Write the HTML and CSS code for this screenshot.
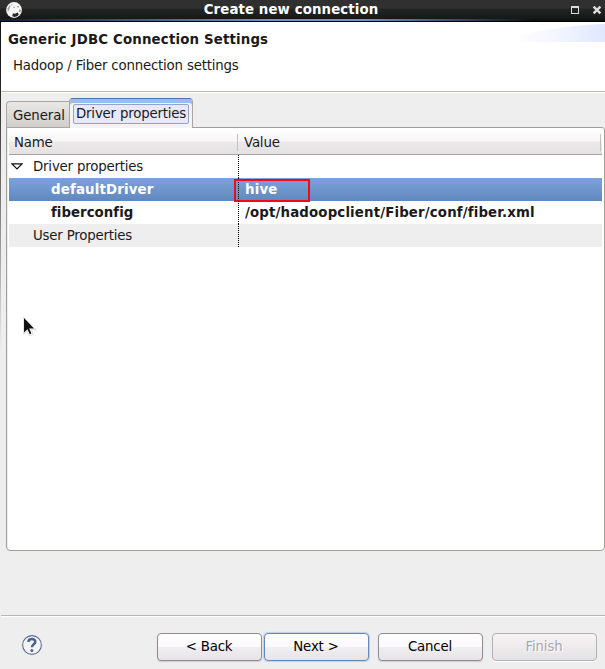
FILE: index.html
```html
<!DOCTYPE html>
<html lang="en">
<head>
<meta charset="utf-8">
<title>Create new connection</title>
<link rel="stylesheet" href="styles.css">
</head>
<body>
<div class="window">
  <header class="titlebar">
    <svg class="logo" width="16" height="16" viewBox="0 0 16 16">
      <circle cx="8" cy="8" r="7.9" fill="#f6f6f6"/>
      <path d="M1.5 6.5 3.2 3.6 4.6 3.4 3.6 6.5 2.6 9.5 1.5 9Z" fill="#a5a5a5"/>
      <path d="M5.2 2.6 6.4 2 5.8 3.4ZM11.4 3.8l1.4.8-.3 1-1.1-.6ZM7.6 4.8h1v1h-1ZM13.6 7l1 1.3-.4 2.4-.9-1.2Z" fill="#6b6260"/>
      <path d="M7 11.2 9 11.8 11.5 10.6 12.8 12.2 11.6 14 8.6 15 6.2 14.2Z" fill="#302725"/>
    </svg>
    <h1>Create new connection</h1>
    <svg class="controls" width="30" height="9" viewBox="0 0 30 9">
      <path d="M0 0h8v8H0ZM1 2v5h6V2Z" fill="#ddd" fill-rule="evenodd"/>
      <path d="m22.6 .6 6.8 6.8m0-6.8-6.8 6.8" stroke="#ddd" stroke-width="2.4"/>
    </svg>
  </header>
  <section class="banner">
    <div>
      <h2>Generic JDBC Connection Settings</h2>
      <p>Hadoop / Fiber connection settings</p>
    </div>
    <svg class="swoosh" width="84" height="20" viewBox="0 0 84 20">
      <defs><linearGradient id="sweep"><stop offset="0" stop-color="#fffcff"/><stop offset=".5" stop-color="#f1f4ff"/><stop offset="1" stop-color="#e0e7ff"/></linearGradient></defs>
      <path d="M0 20V13Q42 3 84 2V20Z" fill="url(#sweep)"/>
    </svg>
  </section>
  <main>
    <nav class="tabs">
      <div class="tab">General</div>
      <div class="tab active"><span>Driver properties</span></div>
    </nav>
    <section class="panel">
      <div class="row head"><div class="name">Name</div><div class="value">Value</div></div>
      <div class="row"><div class="name group"><svg class="expander" width="12" height="7" viewBox="0 0 12 7"><path d="M1 .8h10L6 6Z" fill="#fff" stroke="#111" stroke-width="1.2"/></svg>Driver properties</div><div class="value"></div></div>
      <div class="row bold selected"><div class="name item">defaultDriver</div><div class="value">hive<i class="mark"></i></div></div>
      <div class="row bold"><div class="name item config">fiberconfig</div><div class="value path">/opt/hadoopclient/Fiber/conf/fiber.xml</div></div>
      <div class="row alt"><div class="name group">User Properties</div><div class="value"></div></div>
    </section>
  </main>
  <footer>
    <svg class="help" width="20" height="20" viewBox="0 0 20 20">
      <circle cx="10" cy="10" r="9.4" fill="#f4f4f8" stroke="#5a6d93" stroke-width="1.1"/>
      <path d="M6.3 6.9C6.7 3 13.5 3.1 13.3 6.9c-.1 2.4-3.3 2.5-3.4 5.4" fill="none" stroke="#4b628c" stroke-width="2.5"/>
      <circle cx="9.9" cy="15.4" r="1.5" fill="#4b628c"/>
    </svg>
    <div class="buttons">
      <button>&lt; Back</button><button class="default">Next &gt;</button><button class="cancel">Cancel</button><button class="finish" disabled>Finish</button>
    </div>
  </footer>
  <svg class="cursor" width="14" height="20" viewBox="0 0 14 20">
    <path d="M1 1v15l3.5-3 2.3 5 2.5-1-2.2-5H12Z" fill="#111" stroke="#fff" stroke-width="2.2"/>
    <path d="M.2 0v17l4-3 2.3 5 3.8-1.5-2-4.8h5Z" fill="none" stroke="#bbb" stroke-width=".5"/>
    <path d="M1 1v14.5l3.5-3.2 2.3 4.9 1.6-.7-2.2-5H11Z" fill="#111"/>
  </svg>
</div>
</body>
</html>
```

FILE: styles.css
```css
* { box-sizing: border-box; }
body { margin: 0; background: #eee; color: #1a1a1a; font: 13.33px/16px "DejaVu Sans", sans-serif; letter-spacing: -.19px; }
h1, h2, p { margin: 0; font-size: inherit; }
.window { position: relative; width: 605px; height: 669px; overflow: hidden; display: flex; flex-direction: column; }
.window::before { content: ""; position: absolute; left: 0; top: 22px; width: 1px; height: 647px; background: linear-gradient(#111 0, #222 60px, #888 200px, #eee 330px); z-index: 2; }
.titlebar { height: 22px; flex: none; display: grid; grid-template-columns: 40px 1fr 38px; background: linear-gradient(#303030 0, #303030 8px, #242424 9px, #161818 19px); position: relative; color: #fff; }
.titlebar::after { content: ""; position: absolute; left: 0; right: 0; bottom: 0; height: 3px; background: linear-gradient(90deg, #142033, #6f94cd 45%, #6f94cd 60%, #111 88%) 0 0 / 100% 2px no-repeat, #000; }
.logo { margin: 2px 0 0 6px; }
.titlebar h1 { text-align: center; padding: 2px 25px 0 0; letter-spacing: .1px; }
.controls { margin: 6px 0 0 4px; }
.banner { height: 71px; flex: none; background: #fff; border-bottom: 1px solid #fff; box-shadow: inset 0 -1px #bcbcb6; display: flex; justify-content: space-between; padding: 10px 0 0 8px; }
.banner h2 { letter-spacing: .17px; }
.banner p { margin: 10px 0 0 5px; }
.swoosh { margin-top: -10px; }
main { padding: 5px 0 0 6px; height: 458px; flex: none; }
.tabs { display: flex; align-items: flex-end; height: 30px; position: relative; z-index: 1; }
.tab { width: 63px; height: 27px; border: 1px solid #aaa69f; border-right: 0; border-radius: 4px 0 0; padding: 6px 0 0 6px; background: linear-gradient(#e9e8e6, #d0cecb); white-space: nowrap; }
.tab:not(.active) { letter-spacing: -.1px; }
.tab.active { width: 124px; height: 30px; background: #f6f3f6; border: 1px solid #aaa69f; border-top: 1px solid #4e72aa; border-bottom: 0; border-radius: 4px 4px 0 0; box-shadow: inset 0 4px #9bbcec; padding: 5px 3px 0 3px; }
.tab span { display: block; height: 20px; border: 1px solid #8ca7cb; border-radius: 2px; background: #e8e8f8; padding: 0 0 0 2px; line-height: 18px; }
.panel { height: 424px; margin-top: -1px; background: #fff; border: 1px solid #a29f98; border-radius: 0 3px 4px 4px; padding: 1px 1px 0 2px; box-shadow: inset 1px 0 #eee; }
.row { display: flex; height: 23px; line-height: 24px; width: 593px; white-space: nowrap; }
.name { width: 229px; }
.value { flex: 1; padding-left: 6px; position: relative; border-left: 1px dotted #000; }
.head { height: 26px; background: linear-gradient(#fff, #f7f5f5 12px, #eceaea 13px, #e3e1e1); border-bottom: 1px solid #aaa2a2; line-height: 27px; }
.head .name { padding-left: 5px; width: 228px; }
.head .value { border: 0; padding-left: 7px; }
.head .value::before, .head .value::after { content: ""; position: absolute; left: 0; top: 5px; width: 1px; height: 17px; background: #c4c0bd; }
.head .value::after { left: auto; right: 1px; }
.group { padding-left: 24px; position: relative; }
.expander { position: absolute; left: 2px; top: 8px; }
.item { padding-left: 42px; }
.bold { font-weight: bold; letter-spacing: .17px; }
.config { letter-spacing: .03px; }
.path { letter-spacing: .15px; }
.selected { background: linear-gradient(#7ca3d9, #6088bf); color: #fff; }
.alt { background: #eee; }
.mark { position: absolute; left: -5px; top: 1px; width: 76px; height: 23px; border: 2px solid #f10b0b; }
footer { border-top: 1px solid #b9b9b2; box-shadow: inset 0 1px #fff; margin-top: 64px; height: 54px; padding: 17px 8px 0 22px; display: flex; justify-content: space-between; }
.help { margin-top: 2px; }
.buttons { display: flex; }
button { width: 105px; height: 28px; border: 1px solid #928b8f; border-radius: 4px; background: linear-gradient(#fff, #fbf9fb 50%, #f0eef0 52%, #e6e4e6); font: inherit; letter-spacing: inherit; color: #000; padding: 0 1px 0 0; box-shadow: 0 1px 1px #ccc; }
.default { margin-left: 2px; border-color: #6288b8; box-shadow: 0 0 1px 1px #bcd0ea; }
.cancel { margin-left: 9px; }
.finish { margin-left: 9px; border-color: #b8b0b4; background: linear-gradient(#f8f4f6, #e4e2e4); color: #aaa7aa; text-shadow: 1px 1px #fff; box-shadow: 0 1px #fff; }
.cursor { position: absolute; left: 23px; top: 317px; }
```
